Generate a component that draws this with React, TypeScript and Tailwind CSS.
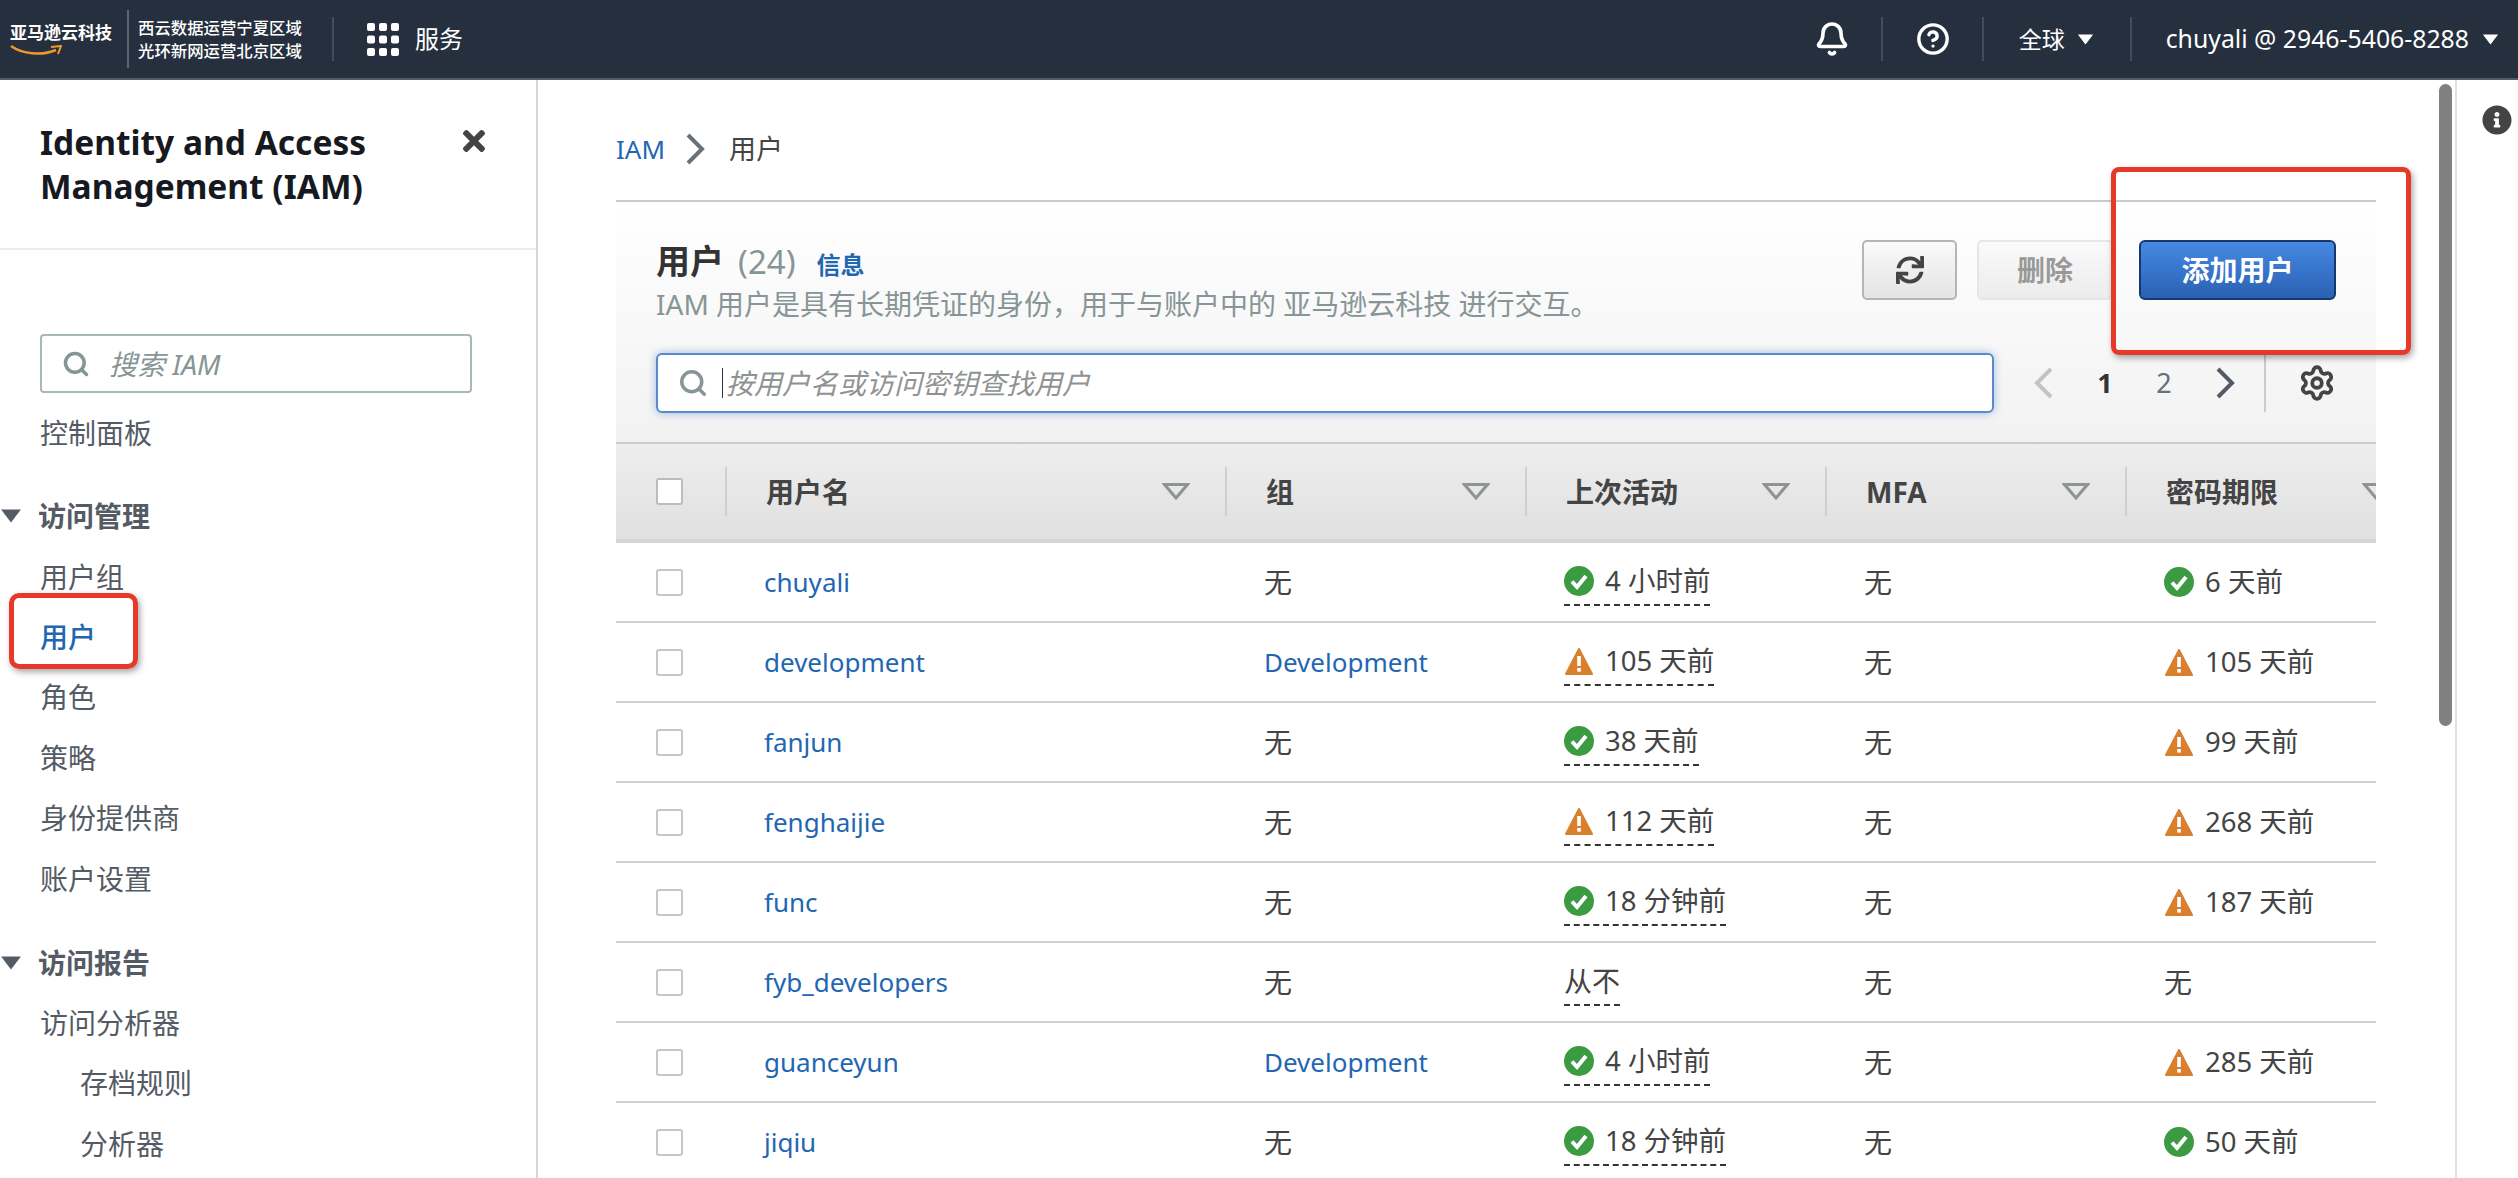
import React from "react";
import { Bell, CircleHelp, Search, Settings } from "lucide-react";
import { FaInfoCircle, FaSync, FaTimes } from "react-icons/fa";

type Status = "ok" | "warn" | "none";

interface Row {
  name: string;
  group: string;
  last: [Status, string];
  pwd: [Status, string];
}

const rows: Row[] = [
  { name: "chuyali", group: "无", last: ["ok", "4 小时前"], pwd: ["ok", "6 天前"] },
  { name: "development", group: "Development", last: ["warn", "105 天前"], pwd: ["warn", "105 天前"] },
  { name: "fanjun", group: "无", last: ["ok", "38 天前"], pwd: ["warn", "99 天前"] },
  { name: "fenghaijie", group: "无", last: ["warn", "112 天前"], pwd: ["warn", "268 天前"] },
  { name: "func", group: "无", last: ["ok", "18 分钟前"], pwd: ["warn", "187 天前"] },
  { name: "fyb_developers", group: "无", last: ["none", "从不"], pwd: ["none", "无"] },
  { name: "guanceyun", group: "Development", last: ["ok", "4 小时前"], pwd: ["warn", "285 天前"] },
  { name: "jiqiu", group: "无", last: ["ok", "18 分钟前"], pwd: ["ok", "50 天前"] },
];

const columns = ["用户名", "组", "上次活动", "MFA", "密码期限"];

function StatusIcon({ status }: { status: Status }) {
  if (status === "ok") {
    return (
      <svg width="30" height="30" viewBox="0 0 30 30" className="shrink-0">
        <circle cx="15" cy="15" r="15" fill="#3c9a42" />
        <path d="M8 15.5l5 5.5 9-11" fill="none" stroke="#fff" strokeWidth="4" />
      </svg>
    );
  }
  if (status === "warn") {
    return (
      <svg width="30" height="27" viewBox="0 0 30 27" className="shrink-0">
        <path d="M15 1 L28 26 H2 Z" fill="#d9802e" stroke="#d9802e" strokeWidth="2" strokeLinejoin="round" />
        <rect x="13.2" y="8" width="3.6" height="10" fill="#fff" />
        <rect x="13.2" y="20" width="3.6" height="3.6" fill="#fff" />
      </svg>
    );
  }
  return null;
}

function SortArrow() {
  return (
    <svg width="28" height="17" viewBox="0 0 28 17" className="shrink-0">
      <path d="M2.5 1.5 H25.5 L14 15 Z" fill="none" stroke="#8f9393" strokeWidth="3" />
    </svg>
  );
}

function Checkbox({ head }: { head?: boolean }) {
  return (
    <div className={`h-[27px] w-[27px] rounded-[3px] border-2 bg-white ${head ? "border-[#bcbcbc]" : "border-[#c6c6c6]"}`} />
  );
}

function Caret({ className }: { className: string }) {
  return (
    <svg viewBox="0 0 20 14" className={className}>
      <path d="M1 1 H19 L10 13 Z" fill="currentColor" />
    </svg>
  );
}

function Chevron({ left, className }: { left?: boolean; className: string }) {
  return (
    <svg width="20" height="32" viewBox="0 0 20 32" className={className}>
      <path d={left ? "M17 2 L3 16 L17 30" : "M3 2 L17 16 L3 30"} fill="none" stroke="currentColor" strokeWidth="4" />
    </svg>
  );
}

function NavItem({ label, indent, active }: { label: string; indent?: boolean; active?: boolean }) {
  return (
    <div
      className={`flex h-[60.4px] items-center text-[28px] ${indent ? "pl-[80px]" : "pl-[40px]"} ${active ? "font-medium text-[#1f66b3]" : "text-[#545b64]"}`}
    >
      {label}
    </div>
  );
}

function NavGroup({ label }: { label: string }) {
  return (
    <div className="flex h-[60px] items-center gap-[16px] text-[28px] font-bold text-[#545b64]">
      <Caret className="h-[16px] w-[22px]" />
      {label}
    </div>
  );
}

function Marker({ label, status }: { label: string; status: Status }) {
  return (
    <div className="flex h-[46px] items-center gap-[11px] text-[27.5px]">
      <StatusIcon status={status} />
      <span>{label}</span>
    </div>
  );
}

function TopDivider() {
  return <div className="h-[44px] w-[2px] bg-[#414d5c]" />;
}

export default function App() {
  return (
    <div
      className="flex h-[1178px] w-[2518px] flex-col overflow-hidden bg-white text-[26px] text-[#444]"
      style={{ fontFamily: '"Noto Sans", "Noto Sans CJK SC", sans-serif' }}
    >
      {/* top nav */}
      <header className="flex h-[80px] shrink-0 items-center border-b-2 border-[#545b64] bg-[#252f3e] text-white">
        <div className="flex w-[127px] flex-col pl-[10px]">
          <span className="text-[17px] font-bold leading-[22px] whitespace-nowrap">亚马逊云科技</span>
          <svg width="52" height="12" viewBox="0 0 52 12" className="mt-[1px]">
            <path d="M1 1 C12 9 32 11 46 5" fill="none" stroke="#f0992b" strokeWidth="2.5" />
            <path d="M41 2 L51 1 L48 9" fill="none" stroke="#f0992b" strokeWidth="2" />
          </svg>
        </div>
        <div className="h-[58px] w-[2px] bg-[#5a6573]" />
        <div className="ml-[9px] flex w-[194px] flex-col text-[16.4px] font-medium leading-[23px] whitespace-nowrap">
          <span>西云数据运营宁夏区域</span>
          <span>光环新网运营北京区域</span>
        </div>
        <TopDivider />
        <svg width="32" height="33" viewBox="0 0 32 33" className="ml-[33px]" fill="#fff">
          <rect x="0" y="0" width="8" height="8" rx="2" />
          <rect x="12" y="0" width="8" height="8" rx="2" />
          <rect x="24" y="0" width="8" height="8" rx="2" />
          <rect x="0" y="12.5" width="8" height="8" rx="2" />
          <rect x="12" y="12.5" width="8" height="8" rx="2" />
          <rect x="24" y="12.5" width="8" height="8" rx="2" />
          <rect x="0" y="25" width="8" height="8" rx="2" />
          <rect x="12" y="25" width="8" height="8" rx="2" />
          <rect x="24" y="25" width="8" height="8" rx="2" />
        </svg>
        <span className="ml-[16px] text-[24px]">服务</span>
        <div className="ml-auto flex items-center">
          <Bell size={36} strokeWidth={2.4} />
          <div className="ml-[31px]"><TopDivider /></div>
          <CircleHelp size={34} strokeWidth={2.4} className="ml-[33px]" />
          <div className="ml-[32px]"><TopDivider /></div>
          <span className="ml-[35px] text-[23px]">全球</span>
          <Caret className="ml-[12px] h-[13px] w-[17px]" />
          <div className="ml-[36px]"><TopDivider /></div>
          <span className="ml-[34px] text-[24.8px] whitespace-nowrap">chuyali @ 2946-5406-8288</span>
          <Caret className="ml-[13px] mr-[19px] h-[13px] w-[17px]" />
        </div>
      </header>

      <div className="flex min-h-0 flex-1">
        {/* side nav */}
        <aside className="w-[538px] shrink-0 border-r-2 border-[#d5d5d5]">
          <div className="flex h-[170px] items-start justify-between border-b-2 border-[#eaeded] pl-[40px] pr-[46px] pt-[40px]">
            <h1 className="text-[33.5px] font-bold leading-[44px] text-[#16191f]">
              Identity and Access
              <br />
              Management (IAM)
            </h1>
            <FaTimes size={32} className="mt-[5px] text-[#444]" />
          </div>
          <div className="mx-[40px] mt-[84px] flex h-[59px] w-[432px] items-center gap-[19px] rounded-[4px] border-2 border-[#aab7b8] pl-[20px] text-[#879596]">
            <Search size={28} strokeWidth={3} />
            <span className="text-[28px] italic">搜索 IAM</span>
          </div>
          <div className="mt-[10px]">
            <NavItem label="控制面板" />
          </div>
          <div className="mt-[23px]">
            <NavGroup label="访问管理" />
            <NavItem label="用户组" />
            <NavItem label="用户" active />
            <NavItem label="角色" />
            <NavItem label="策略" />
            <NavItem label="身份提供商" />
            <NavItem label="账户设置" />
          </div>
          <div className="mt-[24px]">
            <NavGroup label="访问报告" />
            <NavItem label="访问分析器" />
            <NavItem label="存档规则" indent />
            <NavItem label="分析器" indent />
          </div>
        </aside>

        {/* content */}
        <main className="w-[1901px] shrink-0 pl-[78px]">
          <div className="w-[1760px]">
            <nav className="flex h-[122px] items-center border-b-2 border-[#cbcbcb] pt-[18px]">
              <span className="text-[#1f66b3]">IAM</span>
              <Chevron className="ml-[20px] text-[#687078]" />
              <span className="ml-[24px] text-[27px] text-[#444]">用户</span>
            </nav>

            <div className="flex h-[242px] flex-col border-b-2 border-[#cbcbcb] bg-gradient-to-b from-white to-[#f2f2f2] px-[40px]">
              <div className="mt-[38px] flex items-start justify-between">
                <div>
                  <div className="flex items-baseline leading-[42px]">
                    <span className="text-[34px] font-bold text-[#333]">用户</span>
                    <span className="ml-[14px] text-[33px] text-[#879596]">(24)</span>
                    <span className="ml-[21px] text-[24px] font-bold text-[#1f66b3]">信息</span>
                  </div>
                  <p className="text-[28px] leading-[36px] text-[#879596]">
                    IAM 用户是具有长期凭证的身份，用于与账户中的 亚马逊云科技 进行交互。
                  </p>
                </div>
                <div className="flex items-center">
                  <button className="flex h-[60px] w-[95px] items-center justify-center rounded-[5px] border-2 border-[#b5b5b5] bg-gradient-to-b from-[#fafafa] to-[#e4e4e4] text-[#444]">
                    <FaSync size={28} />
                  </button>
                  <button className="ml-[20px] h-[60px] w-[136px] rounded-[5px] border-2 border-[#e6e6e6] bg-gradient-to-b from-[#fafafa] to-[#ececec] text-[28px] font-bold text-[#999]">
                    删除
                  </button>
                  <button className="ml-[26px] h-[60px] w-[197px] rounded-[6px] border-2 border-[#15396f] bg-gradient-to-b from-[#4689e3] to-[#2a61b3] text-[28px] font-bold text-white">
                    添加用户
                  </button>
                </div>
              </div>
              <div className="mt-[31px] flex items-center">
                <div className="flex h-[60px] w-[1338px] items-center rounded-[6px] border-2 border-[#5a8ac9] bg-white pl-[20px] shadow-[0_0_8px_rgba(70,130,210,0.5)]">
                  <Search size={30} strokeWidth={2.8} className="text-[#879596]" />
                  <div className="ml-[14px] h-[30px] w-[1px] bg-[#333]" />
                  <span className="ml-[3px] text-[28px] italic text-[#8f9393]">按用户名或访问密钥查找用户</span>
                </div>
                <Chevron left className="ml-[40px] text-[#c0c4c4]" />
                <span className="ml-[39px] w-[24px] text-center text-[27px] font-bold text-[#333]">1</span>
                <span className="ml-[35px] w-[24px] text-center text-[27px] text-[#687078]">2</span>
                <Chevron className="ml-[39px] text-[#545b64]" />
                <div className="ml-[29px] h-[58px] w-[2px] bg-[#cbcbcb]" />
                <Settings size={38} strokeWidth={2.4} className="ml-[32px] text-[#444]" />
              </div>
            </div>

            {/* table */}
            <div className="overflow-hidden">
              <div className="grid h-[99px] grid-cols-[109px_500px_300px_300px_300px_300px] items-center border-b-[4px] border-[#d5d5d5] bg-gradient-to-b from-[#eeeeee] to-[#e0e0e0]">
                <div className="pl-[40px]">
                  <Checkbox head />
                </div>
                {columns.map((col) => (
                  <div key={col} className="flex h-[49px] items-center justify-between border-l-2 border-[#cfcfcf] pl-[39px] pr-[35px]">
                    <span className="text-[28px] font-bold text-[#444]">{col}</span>
                    <SortArrow />
                  </div>
                ))}
              </div>

              {rows.map((row) => (
                <div key={row.name} className="grid h-[80px] grid-cols-[109px_500px_300px_300px_300px_300px] items-center border-b-2 border-[#cfcfcf]">
                  <div className="pl-[40px]">
                    <Checkbox />
                  </div>
                  <div className="pl-[39px] text-[#1f66b3]">{row.name}</div>
                  <div className={`pl-[39px] ${row.group === "无" ? "text-[28px]" : "text-[#1f66b3]"}`}>{row.group}</div>
                  <div className="flex pl-[39px]">
                    <div className="border-b-2 border-dashed border-[#333]">
                      {row.last[0] === "none" ? <div className="flex h-[46px] items-center text-[28px]">{row.last[1]}</div> : <Marker label={row.last[1]} status={row.last[0]} />}
                    </div>
                  </div>
                  <div className="pl-[39px] text-[28px]">无</div>
                  <div className="pl-[39px] text-[28px]">
                    {row.pwd[0] === "none" ? row.pwd[1] : <Marker label={row.pwd[1]} status={row.pwd[0]} />}
                  </div>
                </div>
              ))}
            </div>
          </div>
        </main>

        {/* scrollbar */}
        <div className="w-[16px] shrink-0 pt-[4px]">
          <div className="h-[642px] w-[13px] rounded-full bg-[#808080]" />
        </div>

        {/* tools rail */}
        <div className="flex-1 border-l-2 border-[#e0e0e0] pl-[25px] pt-[25px]">
          <FaInfoCircle size={30} className="text-[#444]" />
        </div>
      </div>

      {/* red annotation boxes */}
      <div className="absolute left-[9px] top-[593px] h-[76px] w-[129px] rounded-[10px] border-[5px] border-[#e53a2a] shadow-[2px_3px_6px_rgba(0,0,0,0.35)]" />
      <div className="absolute left-[2111px] top-[167px] h-[188px] w-[300px] rounded-[8px] border-[5px] border-[#e53a2a] shadow-[2px_3px_6px_rgba(0,0,0,0.35)]" />
    </div>
  );
}
